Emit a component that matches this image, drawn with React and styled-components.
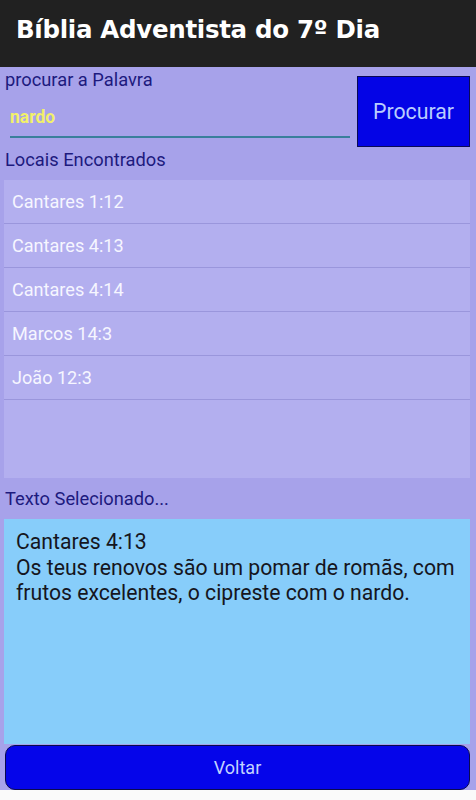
import React from 'react';
import styled, { createGlobalStyle } from 'styled-components';

const Global = createGlobalStyle`
  html, body {
    margin: 0;
    padding: 0;
    background: #fafafa;
  }
  * { box-sizing: border-box; }
`;

const Page = styled.div`
  width: 476px;
  height: 800px;
  display: flex;
  flex-direction: column;
  font-family: Roboto, "Liberation Sans", sans-serif;
  background: #fafafa;
`;

const Header = styled.header`
  height: 67px;
  flex: none;
  background: #212121;
  display: flex;
  align-items: center;
  padding: 0 0 8px 16px;
  color: #fff;
  font-family: "DejaVu Sans", sans-serif;
  font-weight: bold;
  font-size: 24.5px;
  letter-spacing: -0.3px;
`;

const Body = styled.main`
  height: 723px;
  flex: none;
  background: #a7a2ea;
  display: flex;
  flex-direction: column;
  padding: 0 6px 0 4px;
`;

const SearchRow = styled.div`
  display: flex;
  gap: 7px;
  padding-top: 3px;
`;

const SearchCol = styled.div`
  flex: 1;
  display: flex;
  flex-direction: column;
`;

const Label = styled.div`
  color: #1d1a7e;
  font-size: 18.3px;
  line-height: 20px;
  padding-left: 1px;
  margin-top: ${p => p.$top || 0}px;
`;

const Input = styled.div`
  margin: 15px 0 0 6px;
  height: 33px;
  border-bottom: 2px solid #3a7f9c;
  color: #f2f06a;
  font-weight: bold;
  font-size: 17.5px;
  line-height: 24px;
`;

const SearchButton = styled.button`
  width: 113px;
  height: 71px;
  margin-top: 6px;
  background: #0404e6;
  border: 1px solid #0a0a55;
  color: #b9cdfd;
  font-family: Roboto, "Liberation Sans", sans-serif;
  font-size: 21.3px;
  padding: 0;
`;

const List = styled.div`
  margin-top: 10px;
  height: 298px;
  flex: none;
  background: #b3afef;
  display: flex;
  flex-direction: column;
`;

const Item = styled.div`
  height: 44px;
  border-bottom: 1px solid #9a96dc;
  color: #f6f6ff;
  font-size: 18.1px;
  display: flex;
  align-items: center;
  padding-left: 8px;
`;

const TextBox = styled.div`
  margin-top: 10px;
  height: 225px;
  flex: none;
  background: #87cdfa;
  color: #151520;
  font-size: 21.2px;
  line-height: 25.5px;
  padding: 10px 6px 0 12px;
`;

const BackButton = styled.button`
  height: 47px;
  margin: 1px 0 0 1px;
  background: #0505ea;
  border: 1px solid #0a0a50;
  border-radius: 10px;
  color: #c2d3ff;
  font-family: Roboto, "Liberation Sans", sans-serif;
  font-size: 18px;
`;

const refs = ['Cantares 1:12', 'Cantares 4:13', 'Cantares 4:14', 'Marcos 14:3', 'João 12:3'];

export default function App() {
  return (
    <Page>
      <Global />
      <Header>Bíblia Adventista do 7º Dia</Header>
      <Body>
        <SearchRow>
          <SearchCol>
            <Label>procurar a Palavra</Label>
            <Input>nardo</Input>
          </SearchCol>
          <SearchButton>Procurar</SearchButton>
        </SearchRow>
        <Label $top={3}>Locais Encontrados</Label>
        <List>
          {refs.map(r => <Item key={r}>{r}</Item>)}
        </List>
        <Label $top={11}>Texto Selecionado...</Label>
        <TextBox>
          Cantares 4:13<br />
          Os teus renovos são um pomar de romãs, com frutos excelentes, o cipreste com o nardo.
        </TextBox>
        <BackButton>Voltar</BackButton>
      </Body>
    </Page>
  );
}
